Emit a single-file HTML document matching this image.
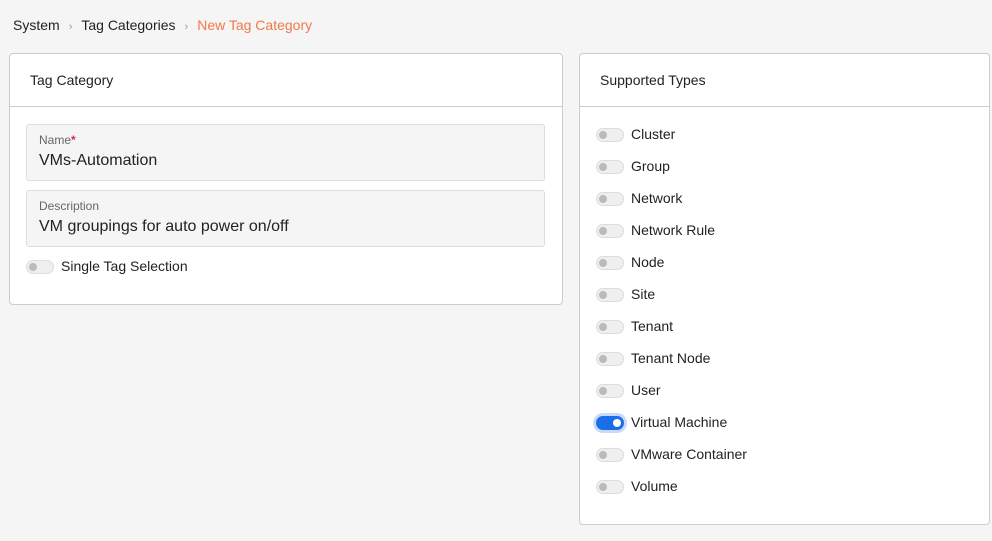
<!DOCTYPE html><html><head><style>
body{margin:0;width:992px;height:541px;background:#f5f5f5;font-family:"Liberation Sans",sans-serif;color:#222;position:relative;overflow:hidden}
.bc{position:absolute;top:17px;left:13px;font-size:14px}
.bc span.s{color:#999;margin:0 9px;font-size:11px}
.card{position:absolute;background:#fff;border:1px solid #ccc;border-radius:4px}
.hd{height:53px;border-bottom:1px solid #ccc;font-size:14px;line-height:53px;padding-left:20px;box-sizing:border-box}
.f{position:absolute;left:16px;width:519px;height:57px;background:#f5f5f5;border:1px solid #ddd;border-radius:3px;box-sizing:border-box}
.f .l{position:absolute;left:12px;top:8px;font-size:12px;color:#666}
.f .v{position:absolute;left:12px;top:27px;font-size:16px;color:#222}
.tg{position:absolute;width:26px;height:12px;border:1px solid #ddd;background:#efefef;border-radius:7px}
.tg:after{content:"";position:absolute;left:2px;top:2px;width:8px;height:8px;border-radius:50%;background:#bbb}
.tg.on{background:#1a6fe8;border-color:#1a6fe8;box-shadow:0 0 0 3px #c6dbfb}
.tg.on:after{left:16px;background:#fff}
.r{position:absolute;font-size:14px}
</style></head><body>
<div class="bc">System<span class="s">›</span>Tag Categories<span class="s">›</span><span style="color:#f2784b">New Tag Category</span></div>
<div class="card" style="left:9px;top:53px;width:552px;height:250px">
<div class="hd">Tag Category</div>
<div class="f" style="top:70px"><div class="l">Name<b style="color:#d0314c">*</b></div><div class="v">VMs-Automation</div></div>
<div class="f" style="top:136px"><div class="l">Description</div><div class="v">VM groupings for auto power on/off</div></div>
<div class="tg" style="left:16px;top:206px"></div><div class="r" style="left:51px;top:204px">Single Tag Selection</div>
</div>
<div class="card" style="left:579px;top:53px;width:409px;height:470px">
<div class="hd">Supported Types</div>
<div class="tg" style="left:16px;top:74px"></div><div class="r" style="left:51px;top:72px">Cluster</div>
<div class="tg" style="left:16px;top:106px"></div><div class="r" style="left:51px;top:104px">Group</div>
<div class="tg" style="left:16px;top:138px"></div><div class="r" style="left:51px;top:136px">Network</div>
<div class="tg" style="left:16px;top:170px"></div><div class="r" style="left:51px;top:168px">Network Rule</div>
<div class="tg" style="left:16px;top:202px"></div><div class="r" style="left:51px;top:200px">Node</div>
<div class="tg" style="left:16px;top:234px"></div><div class="r" style="left:51px;top:232px">Site</div>
<div class="tg" style="left:16px;top:266px"></div><div class="r" style="left:51px;top:264px">Tenant</div>
<div class="tg" style="left:16px;top:298px"></div><div class="r" style="left:51px;top:296px">Tenant Node</div>
<div class="tg" style="left:16px;top:330px"></div><div class="r" style="left:51px;top:328px">User</div>
<div class="tg on" style="left:16px;top:362px"></div><div class="r" style="left:51px;top:360px">Virtual Machine</div>
<div class="tg" style="left:16px;top:394px"></div><div class="r" style="left:51px;top:392px">VMware Container</div>
<div class="tg" style="left:16px;top:426px"></div><div class="r" style="left:51px;top:424px">Volume</div>
</div>
</body></html>
